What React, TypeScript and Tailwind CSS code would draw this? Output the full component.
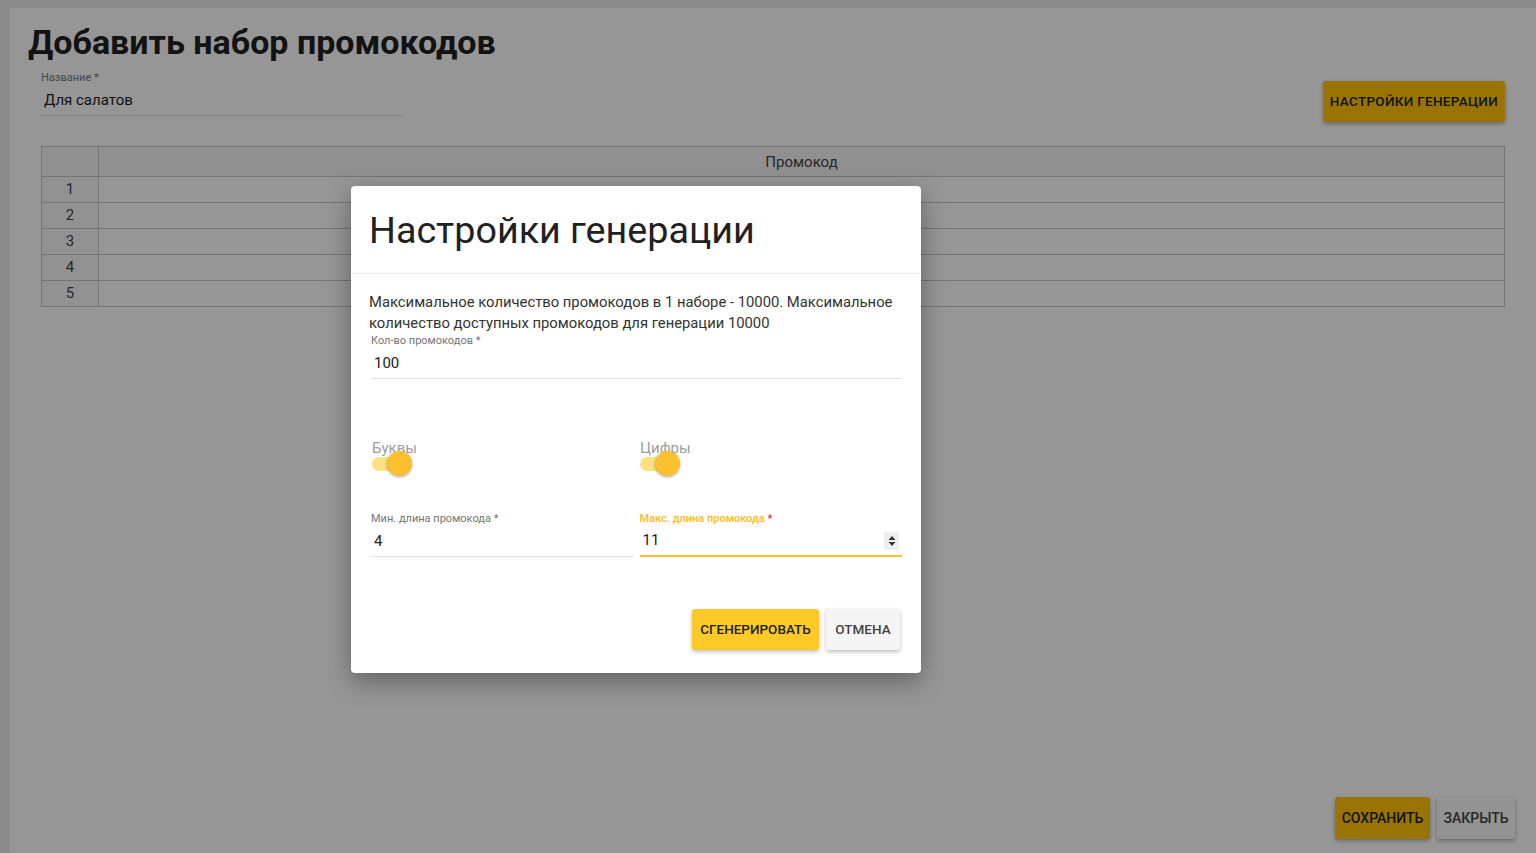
const rows = [1, 2, 3, 4, 5];

function Toggle({ label }: { label: string }) {
  return (
    <div className="flex flex-col">
      <span className="text-[15px] leading-[18px] text-[#9e9e9e]">{label}</span>
      <div className="relative mt-[-6px] h-[28px] w-[44px]">
        <div className="absolute left-0 top-[6px] h-[14px] w-[32px] rounded-full bg-[#ffe082]" />
        <div className="absolute left-[15px] top-[0px] h-[25px] w-[25px] rounded-full bg-[#fbc02d] shadow-[0_1px_3px_rgba(0,0,0,0.35)]" />
      </div>
    </div>
  );
}

function Field({
  label,
  value,
  focused,
  spinner,
}: {
  label: string;
  value: string;
  focused?: boolean;
  spinner?: boolean;
}) {
  return (
    <div className="flex flex-col">
      <span
        className={
          focused
            ? 'text-[11px] leading-[14px] font-semibold text-[#fbc02d]'
            : 'text-[11px] leading-[14px] text-[#757575]'
        }
      >
        {label} <span className={focused ? 'text-[#e53935]' : ''}>*</span>
      </span>
      <div
        className={
          focused
            ? 'flex h-[31px] items-center justify-between border-b-2 border-[#fbc02d] pl-[3px] pr-[3px]'
            : 'flex h-[31px] items-center justify-between border-b border-[#e0e0e0] pl-[3px]'
        }
      >
        <span className="text-[15px] text-[#212121]">{value}</span>
        {spinner && (
          <div className="flex h-[18px] w-[15px] items-center justify-center bg-[#efefef]">
            <svg width="8" height="12" viewBox="0 0 8 12">
              <path d="M4 1 L7.5 5 H0.5 Z" fill="#333" />
              <path d="M4 11 L7.5 7 H0.5 Z" fill="#333" />
            </svg>
          </div>
        )}
      </div>
    </div>
  );
}

export default function App() {
  return (
    <div className="relative h-[853px] w-[1536px] overflow-hidden bg-[#e9e9e9] pl-[10px] pt-[8px] font-['Roboto',sans-serif]">
      <div className="flex h-[845px] flex-col bg-[#fbfbfb] pl-[18px] pr-[31px]">
        <h1 className="mt-[14px] text-[34px] font-bold leading-[40px] text-[#212121]">
          Добавить набор промокодов
        </h1>
        <div className="flex items-start justify-between pl-[13px]">
          <div className="mt-[9px] flex w-[362px] flex-col">
            <span className="text-[11px] leading-[14px] text-[#757575]">Название *</span>
            <div className="flex h-[31px] items-center border-b border-[#d5d5d5] pl-[3px]">
              <span className="text-[15px] text-[#212121]">Для салатов</span>
            </div>
          </div>
          <button className="mt-[19px] h-[41px] rounded-[3px] bg-[#ffc107] px-[7px] text-[13.5px] font-medium tracking-[0.3px] text-[#212121] shadow-[0_2px_4px_rgba(0,0,0,0.3)]">
            НАСТРОЙКИ ГЕНЕРАЦИИ
          </button>
        </div>
        <table className="ml-[13px] mt-[24px] border-collapse border border-[#c2c2c2] text-[15px] text-[#424242]">
          <thead>
            <tr className="h-[30px] bg-[#f0f0f0]">
              <th className="w-[57px] border border-[#c2c2c2] font-normal"></th>
              <th className="border border-[#c2c2c2] pt-[2px] font-normal">Промокод</th>
            </tr>
          </thead>
          <tbody>
            {rows.map((r) => (
              <tr key={r} className="h-[26px]">
                <td className="border border-[#c2c2c2] bg-[#f4f4f4] text-center">{r}</td>
                <td className="border border-[#c2c2c2] bg-[#fbfbfb]"></td>
              </tr>
            ))}
          </tbody>
        </table>
        <div className="mt-auto mb-[14px] flex justify-end gap-[7px]">
          <button className="h-[42px] w-[95px] rounded-[3px] bg-[#ffc107] text-[14px] font-medium text-[#212121] shadow-[0_2px_4px_rgba(0,0,0,0.3)]">
            СОХРАНИТЬ
          </button>
          <button className="mr-[-10px] h-[42px] w-[78px] rounded-[3px] bg-[#f5f5f5] text-[14px] font-medium text-[#424242] shadow-[0_2px_4px_rgba(0,0,0,0.3)]">
            ЗАКРЫТЬ
          </button>
        </div>
      </div>

      <div className="absolute inset-0 bg-black/40">
        <div className="absolute left-[351px] top-[186px] flex h-[487px] w-[570px] flex-col rounded-[4px] bg-white shadow-[0_8px_24px_rgba(0,0,0,0.35)]">
          <div className="h-[88px] border-b border-[#ececec] pl-[18px] pt-[20px]">
            <h2 className="text-[37.7px] leading-[48px] font-normal text-[#212121]">Настройки генерации</h2>
          </div>
          <div className="flex flex-1 flex-col pl-[18px] pr-[19px] pt-[18px]">
            <p className="text-[14.8px] leading-[21px] text-[#333]">
              Максимальное количество промокодов в 1 наборе - 10000. Максимальное количество доступных промокодов для генерации 10000
            </p>
            <div className="ml-[2px]">
              <Field label="Кол-во промокодов" value="100" />
            </div>
            <div className="ml-[3px] mt-[60px] grid grid-cols-2 gap-[6px]">
              <Toggle label="Буквы" />
              <Toggle label="Цифры" />
            </div>
            <div className="ml-[2px] mt-[33px] grid grid-cols-2 gap-[6px]">
              <Field label="Мин. длина промокода" value="4" />
              <Field label="Макс. длина промокода" value="11" focused spinner />
            </div>
            <div className="mt-[52px] flex justify-end gap-[7px] pr-[2px]">
              <button className="h-[41px] w-[127px] rounded-[3px] bg-[#ffca28] text-[13.5px] font-medium text-[#212121] shadow-[0_2px_4px_rgba(0,0,0,0.25)]">
                СГЕНЕРИРОВАТЬ
              </button>
              <button className="h-[41px] w-[74px] rounded-[3px] bg-[#f5f5f5] text-[13.5px] font-medium text-[#424242] shadow-[0_2px_4px_rgba(0,0,0,0.25)]">
                ОТМЕНА
              </button>
            </div>
          </div>
        </div>
      </div>
    </div>
  );
}
